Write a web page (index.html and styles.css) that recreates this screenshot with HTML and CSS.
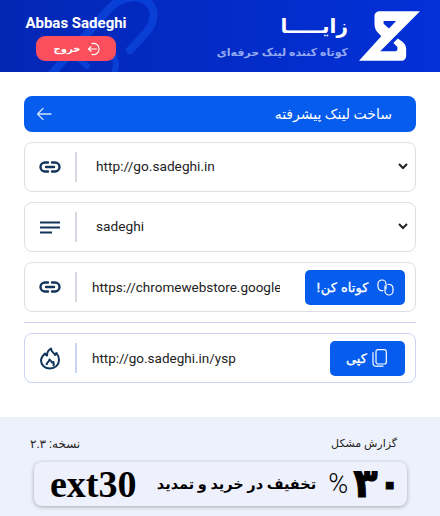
FILE: index.html
```html
<!DOCTYPE html>
<html lang="fa">
<head>
    <meta charset="UTF-8">
    <title>زایا</title>
    <link rel="stylesheet" href="styles.css">
</head>
<body>

    <!-- header -->
    <header class="top-bar">
        <svg class="top-deco" viewBox="0 0 220 72" width="220" height="72" fill="none" stroke="#0a3fd6" stroke-linecap="round">
            <path d="M48 78 L108 10 C120 -4 142 -8 151 6 C156 14 153 24 146 33 L130 50" stroke-width="8"/>
            <path d="M87 66 L68 48" stroke-width="6"/>
            <path d="M113 76 C118 66 116 58 112 54" stroke-width="6"/>
        </svg>
        <div class="user-box">
            <div class="user-name">Abbas Sadeghi</div>
            <a class="logout-btn">
                <span>خروج</span>
                <svg width="14" height="14" viewBox="0 0 14 14" fill="none" stroke="#fff" stroke-width="1.1" stroke-linecap="round" stroke-linejoin="round">
                    <path d="M5 1.6 A5.6 5.6 0 1 1 5 12.4"/>
                    <path d="M9.5 7 H1.5 M4 4.6 L1.5 7 L4 9.4"/>
                </svg>
            </a>
        </div>
        <div class="brand">
            <div class="brand-text">
                <div class="brand-title">زایـــــا</div>
                <div class="brand-sub">کوتاه کننده لینک حرفه‌ای</div>
            </div>
            <svg class="brand-logo" viewBox="12 18 181 147" width="61" height="50">
                <path fill="#fff" fill-rule="evenodd" d="M75 18 H193 L75 137 H118 C123 137 126 134 126 130 V124 L114 112 L127 99 L140 108 C148 114 152 122 152 130 V150 C152 158 146 165 138 165 H12 L78 92 L65 78 C60 72 58 62 58 55 V32 C58 24 65 18 75 18 Z M85 47 H122 L101 69 L85 55 Z"/>
            </svg>
        </div>
    </header>

    <main class="content">
        <a class="advanced-btn">
            <svg width="16" height="14" viewBox="0 0 16 14" fill="none" stroke="#cfe0ff" stroke-width="1.3" stroke-linecap="round" stroke-linejoin="round">
                <path d="M15 7 H1.5 M7 1.5 L1.5 7 L7 12.5"/>
            </svg>
            <span>ساخت لینک پیشرفته</span>
        </a>

        <div class="field-row">
            <span class="field-icon">
                <svg width="22" height="12" viewBox="0 0 22 12" fill="none" stroke="#12355b" stroke-width="2.4" stroke-linecap="round"><path d="M9 1.5 H6 A4.5 4.5 0 0 0 6 10.5 H9 M13 1.5 H16 A4.5 4.5 0 0 1 16 10.5 H13 M7 6 H15"/></svg>
            </span>
            <select class="field-select"><option>http://go.sadeghi.in</option></select>
        </div>

        <div class="field-row">
            <span class="field-icon">
                <svg width="20" height="13" viewBox="0 0 20 13" fill="none" stroke="#12355b" stroke-width="2"><path d="M0 1.5 H20 M0 6.5 H20 M0 11.5 H12"/></svg>
            </span>
            <select class="field-select"><option>sadeghi</option></select>
        </div>

        <div class="field-row">
            <span class="field-icon">
                <svg width="22" height="12" viewBox="0 0 22 12" fill="none" stroke="#12355b" stroke-width="2.4" stroke-linecap="round"><path d="M9 1.5 H6 A4.5 4.5 0 0 0 6 10.5 H9 M13 1.5 H16 A4.5 4.5 0 0 1 16 10.5 H13 M7 6 H15"/></svg>
            </span>
            <input class="field-input" type="text" value="https://chromewebstore.google.com/detail/zaya">
            <button class="action-btn">
                <span>کوتاه کن!</span>
                <svg width="17" height="17" viewBox="0 0 17 17" fill="none" stroke="#fff" stroke-width="1.2" stroke-linecap="round"><path d="M6 11.5 A4 4 0 0 1 1 8 V5 A4 4 0 0 1 9 5 V10"/><path d="M11 5.5 A4 4 0 0 1 16 9 V12 A4 4 0 0 1 8 12 V7"/></svg>
            </button>
        </div>

        <hr class="divider">

        <div class="field-row result-row">
            <span class="field-icon">
                <svg width="20" height="23" viewBox="0 0 20 23" fill="none" stroke="#12355b" stroke-width="2" stroke-linejoin="round"><path d="M11 1.500 C11 5 14 5.500 15 8 C15.500 7 16 6.500 16.500 6 C18 8 19 10.500 19 13 C19 18 15 21.500 10 21.500 C5 21.500 1 18 1 13.500 C1 10.500 3 8.500 5 6.500 C5.500 7.500 6 8 7 8.500 C7 6 8.500 3 11 1.500 Z"/><path d="M6.500 18 C6.500 15.500 9 15 9.500 12.500 C11 13.500 11.500 14.500 12 15.500 C12.500 15 13 15 13.500 15 C14 16.500 13.500 18.500 13 19"/></svg>
            </span>
            <input class="field-input" type="text" value="http://go.sadeghi.in/ysp">
            <button class="action-btn copy-btn">
                <span>کپی</span>
                <svg width="15" height="18" viewBox="0 0 15 18" fill="none" stroke="#fff" stroke-width="1.2" stroke-linejoin="round" stroke-linecap="round"><rect x="4" y="0.7" width="10.300" height="14.300" rx="2"/><path d="M1 3.500 V14 A3.200 3.200 0 0 0 4.200 17.200 H11"/></svg>
            </button>
        </div>
    </main>

    <footer class="bottom">
        <div class="bottom-links">
            <span class="version">نسخه: ۲.۳</span>
            <a class="report">گزارش مشکل</a>
        </div>
        <div class="promo">
            <span class="promo-code">ext30</span>
            <span class="promo-text">تخفیف در خرید و تمدید</span>
            <span class="promo-percent">%</span>
            <span class="promo-num">۳۰</span>
        </div>
    </footer>

</body>
</html>
```

FILE: styles.css
```css
* { box-sizing: border-box; }

body {
    margin: 0;
    font-family: Roboto, "DejaVu Sans", sans-serif;
    background-color: #fff;
    color: #222;
}

/* header */
.top-bar {
    position: relative;
    overflow: hidden;
    height: 72px;
    display: flex;
    justify-content: space-between;
    padding: 11px 20px 0 25px;
    background: linear-gradient(90deg, #0327b4 0%, #0330d8 100%);
}
.top-deco { position: absolute; left: 0; top: 0; }

.user-box {
    position: relative;
    width: 102px;
    display: flex;
    flex-direction: column;
    align-items: center;
}
.user-name {
    font-size: 15px;
    font-weight: 700;
    line-height: 24px;
    color: #fff;
    white-space: nowrap;
}
.logout-btn {
    width: 80px;
    height: 25px;
    margin-top: 1px;
    display: flex;
    justify-content: center;
    align-items: center;
    gap: 7px;
    padding-left: 3px;
    border-radius: 9px;
    background-color: #fb4f5d;
    color: #fff;
    font-size: 10px;
    font-weight: 700;
}

.brand { position: relative; display: flex; gap: 11px; }
.brand-text { text-align: right; direction: rtl; }
.brand-title { font-size: 20px; font-weight: 700; line-height: 28px; margin-top: 1px; color: #fff; }
.brand-sub { font-size: 11px; font-weight: 700; line-height: 20px; margin-top: 3px; color: #93a9ef; white-space: nowrap; }
.brand-logo { flex: none; }

/* main */
.content { padding: 24px 24px 0; }

.advanced-btn {
    height: 36px;
    display: flex;
    justify-content: space-between;
    align-items: center;
    padding: 0 24px 0 12px;
    border-radius: 8px;
    background-color: #055ced;
    color: #fff;
    font-size: 14px;
}

.field-row {
    height: 50px;
    margin-top: 10px;
    display: flex;
    align-items: center;
    border: 1px solid #dcdfe6;
    border-radius: 8px;
    padding-right: 10px;
}
.field-icon {
    flex: none;
    width: 52px;
    height: 30px;
    display: flex;
    align-items: center;
    justify-content: center;
    border-right: 2px solid #d5d9e0;
    margin-right: 15px;
}
.field-select {
    flex: 1;
    min-width: 0;
    height: 40px;
    border: none;
    outline: none;
    background: transparent;
    font-family: Roboto, sans-serif;
    font-size: 13.7px;
    color: #222;
    padding: 0;
    margin-right: -6px;
    margin-bottom: 2px;
}
.field-input {
    flex: 1;
    min-width: 0;
    border: none;
    outline: none;
    font-family: Roboto, sans-serif;
    font-size: 13.5px;
    color: #222;
    padding: 0;
    margin-right: 25px;
}

.action-btn {
    flex: none;
    width: 100px;
    height: 35px;
    display: flex;
    justify-content: center;
    align-items: center;
    gap: 9px;
    border: none;
    border-radius: 5px;
    background-color: #055ced;
    color: #fff;
    font-family: "DejaVu Sans", sans-serif;
    font-size: 13px;
    -webkit-text-stroke: 0.3px #fff;
    direction: ltr;
}
.action-btn span { direction: rtl; unicode-bidi: isolate; }
.copy-btn { width: 75px; gap: 5px; padding-right: 8px; }

.divider {
    margin: 10px 0 0;
    border: 0;
    border-top: 1px solid #cdd3f5;
}
.result-row { border-color: #cdd3f5; margin-top: 10px; }
.result-row .field-icon { border-right-color: #cdd3f5; }

/* footer */
.bottom {
    margin-top: 34px;
    height: 99px;
    padding: 19px 33px 0 30px;
    background-color: #edf1fb;
}
.bottom-links {
    display: flex;
    justify-content: space-between;
    font-size: 12px;
    line-height: 16px;
    direction: ltr;
}
.report { font-size: 11px; padding-right: 10px; }
.promo {
    height: 44px;
    margin: 10px 0 0 4px;
    display: flex;
    align-items: center;
    padding: 0 5px 0 16px;
    border-radius: 8px;
    background-color: #eef1fb;
    box-shadow: 0 1px 4px rgba(0, 0, 0, 0.3);
    color: #000;
}
.promo-code { font-family: "Liberation Serif", serif; font-size: 38px; font-weight: 700; }
.promo-text { font-size: 14.5px; font-weight: 700; margin-left: auto; direction: rtl; white-space: nowrap; }
.promo-percent { font-family: Roboto, sans-serif; font-size: 27px; font-weight: 300; margin-left: 12px; }
.promo-num { font-size: 40px; font-weight: 700; line-height: 40px; margin-left: 5px; -webkit-text-stroke: 1px #000; }
```
